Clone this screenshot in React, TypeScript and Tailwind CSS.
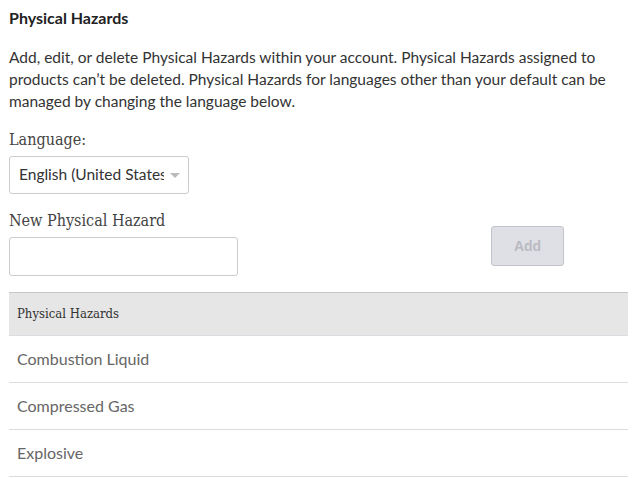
const hazards = ["Combustion Liquid", "Compressed Gas", "Explosive"];

const sans = "font-['Lato','Liberation_Sans',sans-serif]";
const serif = "font-['DejaVu_Serif','Liberation_Serif',serif] font-stretch-condensed";

export default function App() {
  return (
    <div className={`w-[643px] h-[478px] bg-white px-[9px] pt-[9px] text-[#333] ${sans} overflow-hidden`}>
      <h1 className="text-[16px] font-bold text-[#222] leading-[18px]">Physical Hazards</h1>

      <p className="mt-[19px] text-[15.5px] leading-[22px] text-[#333] pr-[6px]">
        Add, edit, or delete Physical Hazards within your account. Physical Hazards assigned to
        products can’t be deleted. Physical Hazards for languages other than your default can be
        managed by changing the language below.
      </p>

      <label className={`block mt-[17px] text-[16px] leading-[22px] text-[#444] ${serif}`}>Language:</label>
      <div className="mt-[5px] w-[180px] h-[38px] border border-[#ccc] rounded-[3px] flex items-center pl-[9px] pr-[8px]">
        <span className="w-[148px] overflow-hidden whitespace-nowrap text-[15.5px] text-[#333]">English (United States)</span>
        <span className="ml-[6px] w-0 h-0 border-l-[5px] border-r-[5px] border-t-[5px] border-l-transparent border-r-transparent border-t-[#bbb]" />
      </div>

      <div className="flex mt-[16px]">
        <div className="w-[229px]">
          <label className={`block text-[16px] leading-[22px] text-[#444] ${serif}`}>New Physical Hazard</label>
          <input className="mt-[5px] w-[229px] h-[39px] border border-[#ccc] rounded-[3px] outline-none px-2" />
        </div>
        <button
          type="button"
          disabled
          className="ml-[253px] mt-[16px] w-[73px] h-[40px] bg-[#dfe0e5] border border-[#c3c4cb] rounded-[3px] text-[14px] font-bold text-[#b9bac2] font-['Liberation_Sans',sans-serif]"
        >
          Add
        </button>
      </div>

      <div className="mt-[16px] w-[619px]">
        <div className={`h-[44px] bg-[#e6e6e6] border-t border-[#c6c6cd] border-b border-b-[#dcdce2] flex items-center pl-[8px] text-[13px] text-[#333] ${serif}`}>
          Physical Hazards
        </div>
        {hazards.map((h) => (
          <div key={h} className="h-[47px] border-b border-[#dcdce0] flex items-center pl-[8px] text-[16px] text-[#666]">
            {h}
          </div>
        ))}
      </div>
    </div>
  );
}
